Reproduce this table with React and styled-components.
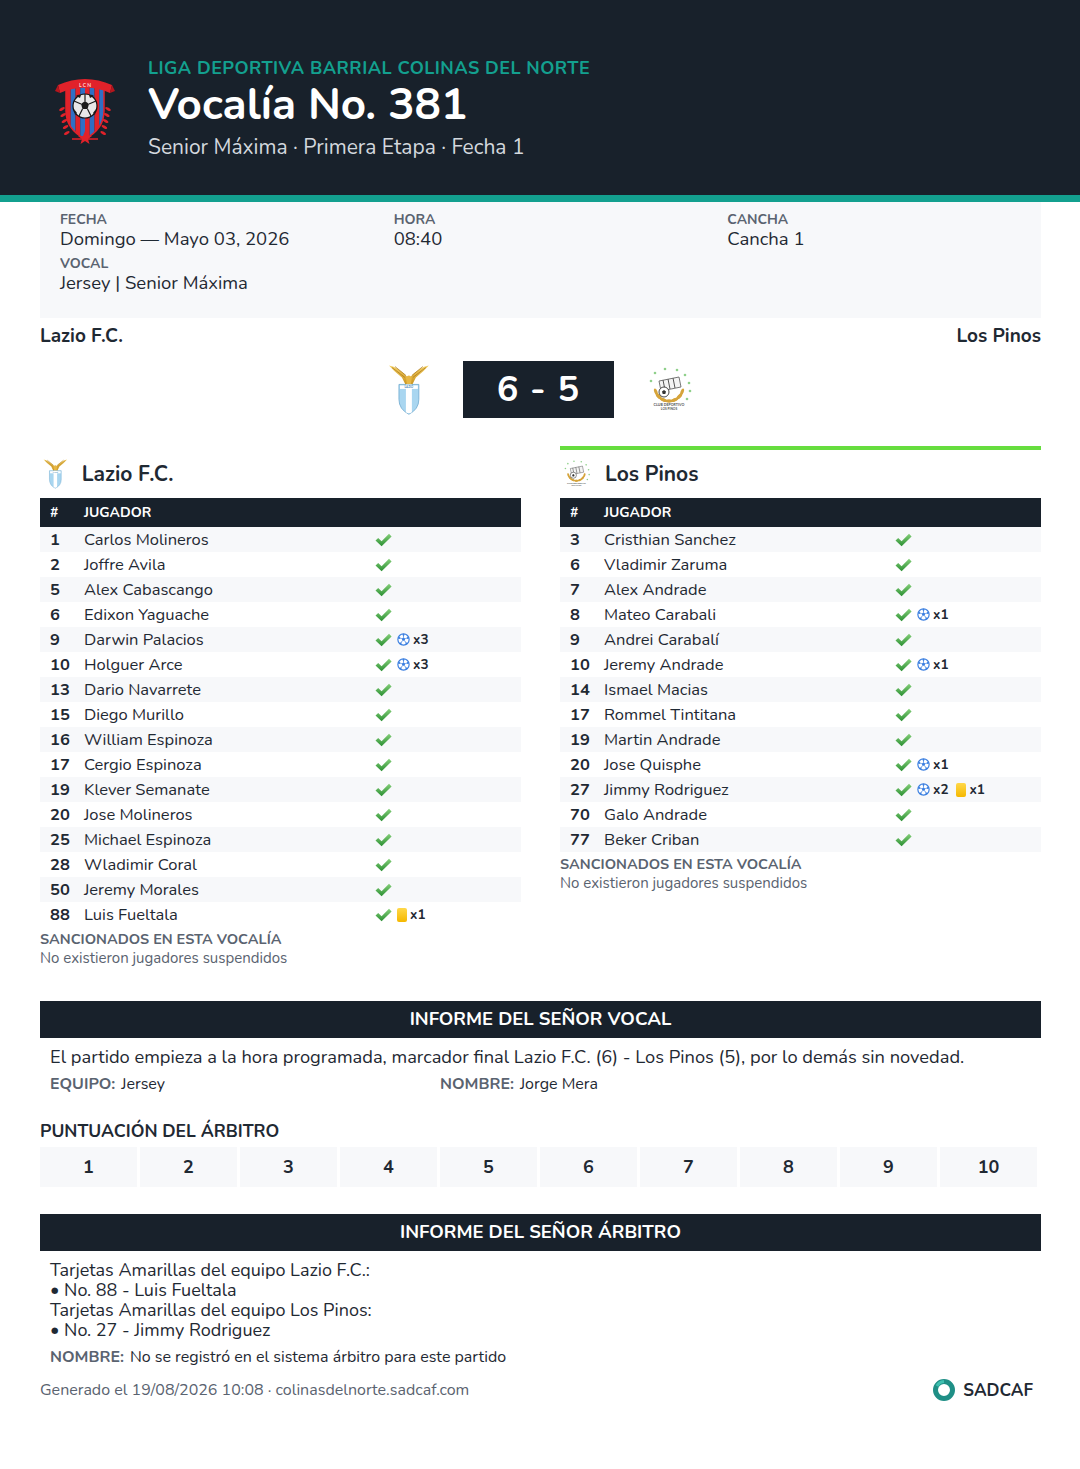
import React from "react";
import styled, { createGlobalStyle } from "styled-components";

const GlobalStyle = createGlobalStyle`
  body {
    margin: 0;
    background: #ffffff;
    font-family: "Nunito", Lato, "Noto Sans", sans-serif;
    color: #1f2933;
  }
  * { box-sizing: border-box; }
`;

const DARK = "#18212b";
const TEAL = "#13a08f";

const lazioPlayers = [
  { n: 1, name: "Carlos Molineros" },
  { n: 2, name: "Joffre Avila" },
  { n: 5, name: "Alex Cabascango" },
  { n: 6, name: "Edixon Yaguache" },
  { n: 9, name: "Darwin Palacios", goals: 3 },
  { n: 10, name: "Holguer Arce", goals: 3 },
  { n: 13, name: "Dario Navarrete" },
  { n: 15, name: "Diego Murillo" },
  { n: 16, name: "William Espinoza" },
  { n: 17, name: "Cergio Espinoza" },
  { n: 19, name: "Klever Semanate" },
  { n: 20, name: "Jose Molineros" },
  { n: 25, name: "Michael Espinoza" },
  { n: 28, name: "Wladimir Coral" },
  { n: 50, name: "Jeremy Morales" },
  { n: 88, name: "Luis Fueltala", yellow: 1 },
];

const pinosPlayers = [
  { n: 3, name: "Cristhian Sanchez" },
  { n: 6, name: "Vladimir Zaruma" },
  { n: 7, name: "Alex Andrade" },
  { n: 8, name: "Mateo Carabali", goals: 1 },
  { n: 9, name: "Andrei Carabalí" },
  { n: 10, name: "Jeremy Andrade", goals: 1 },
  { n: 14, name: "Ismael Macias" },
  { n: 17, name: "Rommel Tintitana" },
  { n: 19, name: "Martin Andrade" },
  { n: 20, name: "Jose Quisphe", goals: 1 },
  { n: 27, name: "Jimmy Rodriguez", goals: 2, yellow: 1 },
  { n: 70, name: "Galo Andrade" },
  { n: 77, name: "Beker Criban" },
];

/* ---------- header ---------- */

const Header = styled.header`
  background: ${DARK};
  border-bottom: 7px solid ${TEAL};
  display: flex;
  align-items: center;
  gap: 32px;
  padding: 55px 40px 33px 54px;
`;

const HeaderText = styled.div`
  display: flex;
  flex-direction: column;
`;

const League = styled.div`
  color: ${TEAL};
  font-size: 18px;
  font-weight: 700;
  line-height: 26px;
  letter-spacing: 0.45px;
`;

const Title = styled.h1`
  margin: 0;
  color: #ffffff;
  font-size: 44px;
  font-weight: 700;
  line-height: 48px;
`;

const Subtitle = styled.div`
  color: #d3d8de;
  font-size: 21px;
  line-height: 30px;
  margin-top: 3px;
`;

/* ---------- info ---------- */

const Main = styled.main`
  padding: 0 39px 0 40px;
`;

const InfoPanel = styled.section`
  background: #f7f8fa;
  display: grid;
  grid-template-columns: repeat(3, 1fr);
  row-gap: 6px;
  padding: 10px 0 24px;
`;

const Field = styled.div`
  display: flex;
  flex-direction: column;
  padding-left: 20px;
`;

const Label = styled.span`
  font-size: 14px;
  font-weight: 700;
  line-height: 16px;
  color: #5a6370;
  text-transform: uppercase;
`;

const Value = styled.span`
  font-size: 18.5px;
  line-height: 22px;
  color: #1f2933;
`;

const TeamsRow = styled.div`
  display: flex;
  justify-content: space-between;
  margin-top: 6px;
  font-size: 19px;
  font-weight: 700;
  line-height: 24px;
`;

const ScoreRow = styled.div`
  display: flex;
  justify-content: center;
  align-items: center;
  gap: 33px;
  margin-top: 13px;
`;

const ScoreBox = styled.div`
  background: ${DARK};
  color: #fff;
  width: 151px;
  height: 57px;
  display: flex;
  align-items: center;
  justify-content: center;
  font-size: 36px;
  font-weight: 700;
  letter-spacing: 1px;
`;

/* ---------- teams ---------- */

const Teams = styled.div`
  display: grid;
  grid-template-columns: 1fr 1fr;
  column-gap: 39px;
  margin-top: 28px;
  align-items: start;
`;

const TeamCol = styled.section`
  border-top: 4px solid ${(p) => p.accent || "transparent"};
`;

const TeamHead = styled.div`
  display: flex;
  align-items: center;
  gap: 14px;
  height: 48px;
  font-size: 21px;
  font-weight: 700;
  padding-left: 3px;
`;

const TableHead = styled.div`
  background: ${DARK};
  color: #fff;
  display: grid;
  grid-template-columns: 34px 291px 1fr;
  height: 29px;
  align-items: center;
  font-size: 14px;
  font-weight: 700;
  padding-left: 10px;
`;

const Row = styled.div`
  display: grid;
  grid-template-columns: 34px 291px 1fr;
  height: 25px;
  align-items: center;
  padding-left: 10px;
  font-size: 16.5px;
  background: ${(p) => (p.striped ? "#f7f8fa" : "#ffffff")};
`;

const Num = styled.span`
  font-weight: 700;
`;

const Status = styled.span`
  display: flex;
  align-items: center;
  gap: 5px;
  font-size: 13.5px;
  font-weight: 700;
`;

const Tag = styled.span`
  display: inline-flex;
  align-items: center;
  gap: 3px;
  margin-right: 3px;
`;

const Card = styled.span`
  display: inline-block;
  width: 10px;
  height: 14px;
  border-radius: 2px;
  background: linear-gradient(#ffd84a, #f5b800);
`;

const SanctionTitle = styled.div`
  margin-top: 3px;
  font-size: 14.5px;
  font-weight: 700;
  color: #5a6370;
  line-height: 18px;
`;

const SanctionText = styled.div`
  font-size: 15px;
  color: #5a6370;
  line-height: 20px;
`;

/* ---------- reports ---------- */

const Bar = styled.div`
  background: ${DARK};
  color: #fff;
  text-align: center;
  font-size: 18.5px;
  font-weight: 700;
  height: 37px;
  line-height: 37px;
  margin-top: ${(p) => p.top || 0}px;
`;

const Paragraph = styled.p`
  margin: 8px 0 0;
  padding-left: 10px;
  font-size: 18.3px;
  line-height: 22px;
`;

const Signers = styled.div`
  display: grid;
  grid-template-columns: ${(p) => (p.single ? "1fr" : "390px 1fr")};
  padding-left: 10px;
  margin-top: ${(p) => p.top || 4}px;
  font-size: 16px;
  line-height: 20px;
`;

const SignLabel = styled.span`
  color: #5a6370;
  font-weight: 700;
  margin-right: 6px;
`;

const RatingTitle = styled.h3`
  margin: 26px 0 0;
  font-size: 17.5px;
  font-weight: 700;
  line-height: 22px;
`;

const Rating = styled.div`
  display: grid;
  grid-template-columns: repeat(10, 1fr);
  gap: 3px;
  margin-top: 5px;
  margin-right: 4px;
`;

const RateCell = styled.div`
  background: #f7f8fa;
  height: 40px;
  display: flex;
  align-items: center;
  justify-content: center;
  font-size: 18px;
  font-weight: 700;
`;

const Lines = styled.div`
  padding: 9px 0 0 10px;
  font-size: 18px;
  line-height: 20px;
`;

const Footer = styled.footer`
  display: flex;
  justify-content: space-between;
  align-items: center;
  margin-top: 11px;
  padding-right: 8px;
  font-size: 16px;
  color: #5a6370;
`;

const Brand = styled.div`
  display: flex;
  align-items: center;
  gap: 7px;
  color: #1f2933;
  font-size: 17px;
  font-weight: 700;
`;

/* ---------- icons ---------- */

function Check() {
  return (
    <svg width="17" height="14" viewBox="0 0 17 14">
      <defs>
        <linearGradient id="chk" x1="0" y1="0" x2="0" y2="1">
          <stop offset="0" stopColor="#86d07a" />
          <stop offset="1" stopColor="#2a8f32" />
        </linearGradient>
      </defs>
      <polygon points="0.5,7.5 3.2,5 6.6,8.2 14,0.8 16.6,3.4 6.6,13.2" fill="url(#chk)" />
    </svg>
  );
}

function Ball() {
  return (
    <svg width="13" height="13" viewBox="0 0 12 12">
      <circle cx="6" cy="6" r="5.2" fill="#fff" stroke="#3b7fe0" strokeWidth="1.1" />
      <polygon points="6,4 7.6,5.2 7,7.1 5,7.1 4.4,5.2" fill="#3b7fe0" />
      <path d="M6 4 L6 1.5 M7.6 5.2 L10 4.4 M7 7.1 L8.5 9.4 M5 7.1 L3.5 9.4 M4.4 5.2 L2 4.4" stroke="#3b7fe0" strokeWidth="0.7" />
      <circle cx="6" cy="1.6" r="0.9" fill="#3b7fe0" />
      <circle cx="2" cy="4.6" r="0.9" fill="#3b7fe0" />
      <circle cx="10" cy="4.6" r="0.9" fill="#3b7fe0" />
      <circle cx="3.3" cy="9.6" r="0.9" fill="#3b7fe0" />
      <circle cx="8.7" cy="9.6" r="0.9" fill="#3b7fe0" />
    </svg>
  );
}

function LeagueLogo() {
  return (
    <svg width="62" height="72" viewBox="0 0 62 72">
      <defs>
        <clipPath id="shield">
          <path d="M12 14 L50 14 L50 38 Q50 56 31 66 Q12 56 12 38 Z" />
        </clipPath>
      </defs>
      <g clipPath="url(#shield)">
        {[0, 1, 2, 3, 4, 5, 6, 7].map((i) => (
          <rect key={i} x={12 + i * 4.75} y="14" width="4.75" height="54" fill={i % 2 ? "#2f6fc4" : "#e1222a"} />
        ))}
      </g>
      <path d="M12 14 L50 14 L50 38 Q50 56 31 66 Q12 56 12 38 Z" fill="none" stroke="#e1222a" strokeWidth="1.5" />
      <circle cx="31" cy="33" r="12" fill="#e8e8e8" stroke="#111" strokeWidth="1.2" />
      <polygon points="31,28 35,31 33.5,36 28.5,36 27,31" fill="#1b1b1b" />
      <path d="M31 21 L31 28 M35 31 L42 28 M33.5 36 L37 43 M28.5 36 L25 43 M27 31 L20 28" stroke="#1b1b1b" strokeWidth="1.2" />
      <path d="M22 23 Q24 21 27 22 L26 25 Z M40 23 Q38 21 35 22 L36 25 Z M20 36 L23 40 L21 42 Z M42 36 L39 40 L41 42 Z" fill="#1b1b1b" />
      <path d="M4 12 Q31 0 58 12 L56 20 Q31 9 6 20 Z" fill="#e1222a" />
      <path d="M4 12 L1 18 L6 20 Z M58 12 L61 18 L56 20 Z" fill="#b5151c" />
      <text x="31" y="13.5" textAnchor="middle" fontSize="5" fill="#ffd0d0" fontFamily="Lato, sans-serif" fontWeight="700">L C N</text>
      {[0, 1, 2, 3, 4].map((i) => (
        <g key={i} fill="#e1222a">
          <ellipse cx={8 + i * 1.2} cy={36 + i * 6} rx="3.2" ry="1.3" transform={`rotate(-30 ${8 + i * 1.2} ${36 + i * 6})`} />
          <ellipse cx={54 - i * 1.2} cy={36 + i * 6} rx="3.2" ry="1.3" transform={`rotate(30 ${54 - i * 1.2} ${36 + i * 6})`} />
        </g>
      ))}
      <polygon points="31,58 33,63 38,63 34,66 35.5,71 31,68 26.5,71 28,66 24,63 29,63" fill="#e1222a" />
      <path d="M18 66 L44 66" stroke="#e1222a" strokeWidth="1.5" />
    </svg>
  );
}

function LazioLogo({ size = 44 }) {
  return (
    <svg width={size * 0.95} height={size * 1.2} viewBox="0 0 42 52">
      <defs>
        <linearGradient id="gold" x1="0" y1="0" x2="0" y2="1">
          <stop offset="0" stopColor="#f3cf63" />
          <stop offset="1" stopColor="#c8921c" />
        </linearGradient>
      </defs>
      <path d="M1 2 Q10 3 21 15 Q32 3 41 2 Q36 8 28 14 L24 22 L18 22 L14 14 Q6 8 1 2 Z" fill="url(#gold)" />
      <path d="M4 4 L17 14 M7 3 L18 12 M38 4 L25 14 M35 3 L24 12" stroke="#a8741a" strokeWidth="0.7" />
      <path d="M18 14 Q21 10 24 14 L23 21 L19 21 Z" fill="#e7b744" />
      <path d="M11 21 L31 21 L31 36 Q31 46 21 51 Q11 46 11 36 Z" fill="#a9d6f0" stroke="#6ea9cf" strokeWidth="0.8" />
      <path d="M18 21 L24 21 L24 49 Q21 51 18 49 Z" fill="#ffffff" />
      <rect x="12" y="22" width="18" height="3.5" fill="#ffffff" />
      <text x="21" y="25" textAnchor="middle" fontSize="3" fill="#4b8ab8" fontFamily="Lato, sans-serif" fontWeight="700">LAZIO</text>
    </svg>
  );
}

function PinosLogo({ size = 45 }) {
  return (
    <svg width={size} height={size} viewBox="0 0 46 46">
      {[[8, 6], [18, 2], [30, 3], [38, 8], [42, 16], [43, 24], [40, 32], [4, 14]].map(([x, y], i) => (
        <circle key={i} cx={x} cy={y} r="1.3" fill="#8fd08a" />
      ))}
      {[0, 1, 2, 3, 4, 5].map((i) => {
        const a = (200 + i * 24) * (Math.PI / 180);
        const b = (-20 - i * 24) * (Math.PI / 180);
        return (
          <g key={i} fill="#d6a43a">
            <ellipse cx={22 + Math.cos(a) * 14} cy={20 - Math.sin(a) * 14} rx="3.4" ry="1.6" transform={`rotate(${-(200 + i * 24) + 90} ${22 + Math.cos(a) * 14} ${20 - Math.sin(a) * 14})`} />
            <ellipse cx={22 + Math.cos(b) * 14} cy={20 - Math.sin(b) * 14} rx="3.4" ry="1.6" transform={`rotate(${-(-20 - i * 24) + 90} ${22 + Math.cos(b) * 14} ${20 - Math.sin(b) * 14})`} />
          </g>
        );
      })}
      <path d="M12 14 L32 10 L34 20 L14 24 Z" fill="#f4f4f4" stroke="#555" strokeWidth="0.8" />
      <path d="M16 13 L18 23 M21 12 L23 22 M26 11 L28 21" stroke="#555" strokeWidth="1" />
      <circle cx="17" cy="25" r="5" fill="#ffffff" stroke="#333" strokeWidth="0.9" />
      <polygon points="17,23 19,24.5 18.3,27 15.7,27 15,24.5" fill="#333" />
      <text x="22" y="39" textAnchor="middle" fontSize="3.6" fill="#555" fontFamily="Lato, sans-serif" fontWeight="700">CLUB DEPORTIVO</text>
      <text x="22" y="43" textAnchor="middle" fontSize="3.2" fill="#555" fontFamily="Lato, sans-serif" fontWeight="700">LOS PINOS</text>
    </svg>
  );
}

function SadcafMark() {
  return (
    <svg width="24" height="24" viewBox="0 0 24 24">
      <circle cx="12" cy="12" r="8.5" fill="none" stroke="#1f8f86" strokeWidth="5" />
      <path d="M5 8 A8.5 8.5 0 0 1 12 3.5" fill="none" stroke="#3fc0b0" strokeWidth="3" />
    </svg>
  );
}

/* ---------- pieces ---------- */

function PlayerTable({ players }) {
  return (
    <>
      <TableHead>
        <span>#</span>
        <span>JUGADOR</span>
        <span />
      </TableHead>
      {players.map((p, i) => (
        <Row key={p.n} striped={i % 2 === 0}>
          <Num>{p.n}</Num>
          <span>{p.name}</span>
          <Status>
            <Check />
            {p.goals ? (
              <Tag>
                <Ball />x{p.goals}
              </Tag>
            ) : null}
            {p.yellow ? (
              <Tag>
                <Card />x{p.yellow}
              </Tag>
            ) : null}
          </Status>
        </Row>
      ))}
      <SanctionTitle>SANCIONADOS EN ESTA VOCALÍA</SanctionTitle>
      <SanctionText>No existieron jugadores suspendidos</SanctionText>
    </>
  );
}

export default function App() {
  return (
    <>
      <GlobalStyle />
      <Header>
        <LeagueLogo />
        <HeaderText>
          <League>LIGA DEPORTIVA BARRIAL COLINAS DEL NORTE</League>
          <Title>Vocalía No. 381</Title>
          <Subtitle>Senior Máxima · Primera Etapa · Fecha 1</Subtitle>
        </HeaderText>
      </Header>

      <Main>
        <InfoPanel>
          <Field>
            <Label>Fecha</Label>
            <Value>Domingo — Mayo 03, 2026</Value>
          </Field>
          <Field>
            <Label>Hora</Label>
            <Value>08:40</Value>
          </Field>
          <Field>
            <Label>Cancha</Label>
            <Value>Cancha 1</Value>
          </Field>
          <Field>
            <Label>Vocal</Label>
            <Value>Jersey | Senior Máxima</Value>
          </Field>
        </InfoPanel>

        <TeamsRow>
          <span>Lazio F.C.</span>
          <span>Los Pinos</span>
        </TeamsRow>

        <ScoreRow>
          <LazioLogo size={44} />
          <ScoreBox>6 - 5</ScoreBox>
          <PinosLogo size={46} />
        </ScoreRow>

        <Teams>
          <TeamCol>
            <TeamHead>
              <LazioLogo size={26} />
              Lazio F.C.
            </TeamHead>
            <PlayerTable players={lazioPlayers} />
          </TeamCol>
          <TeamCol accent="#66dd3e">
            <TeamHead>
              <PinosLogo size={28} />
              Los Pinos
            </TeamHead>
            <PlayerTable players={pinosPlayers} />
          </TeamCol>
        </Teams>

        <Bar top={33}>INFORME DEL SEÑOR VOCAL</Bar>
        <Paragraph>
          El partido empieza a la hora programada, marcador final Lazio F.C. (6) - Los Pinos (5), por lo demás sin novedad.
        </Paragraph>
        <Signers top={6}>
          <span>
            <SignLabel>EQUIPO:</SignLabel>Jersey
          </span>
          <span>
            <SignLabel>NOMBRE:</SignLabel>Jorge Mera
          </span>
        </Signers>

        <RatingTitle>PUNTUACIÓN DEL ÁRBITRO</RatingTitle>
        <Rating>
          {[1, 2, 3, 4, 5, 6, 7, 8, 9, 10].map((n) => (
            <RateCell key={n}>{n}</RateCell>
          ))}
        </Rating>

        <Bar top={27}>INFORME DEL SEÑOR ÁRBITRO</Bar>
        <Lines>
          <div>Tarjetas Amarillas del equipo Lazio F.C.:</div>
          <div>• No. 88 - Luis Fueltala</div>
          <div>Tarjetas Amarillas del equipo Los Pinos:</div>
          <div>• No. 27 - Jimmy Rodriguez</div>
        </Lines>
        <Signers single top={7}>
          <span>
            <SignLabel>NOMBRE:</SignLabel>No se registró en el sistema árbitro para este partido
          </span>
        </Signers>

        <Footer>
          <span>Generado el 19/08/2026 10:08 · colinasdelnorte.sadcaf.com</span>
          <Brand>
            <SadcafMark />
            SADCAF
          </Brand>
        </Footer>
      </Main>
    </>
  );
}
